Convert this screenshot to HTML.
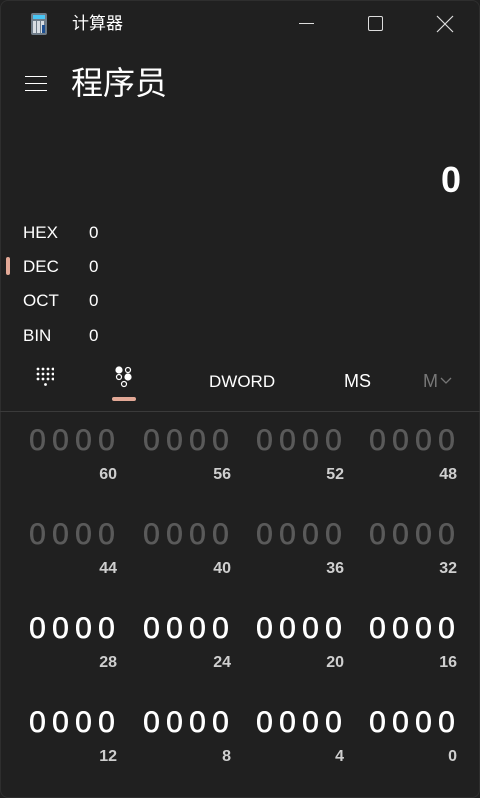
<!DOCTYPE html>
<html><head><meta charset="utf-8"><style>
*{margin:0;padding:0;box-sizing:border-box}
body{width:480px;height:798px;background:#202020;font-family:"Liberation Sans","Noto Sans CJK SC",sans-serif;color:#fff;position:relative;overflow:hidden}
.a{position:absolute;white-space:nowrap}
.g{position:absolute;display:flex;font-size:30px;font-weight:normal;line-height:30px;-webkit-text-stroke:0.6px currentColor}
.g span{width:23px;text-align:center}
.dim{color:#5a5a5a}
.l{position:absolute;font-size:16px;font-weight:bold;color:#cfcfcf;text-align:right;width:60px;line-height:18px}
.r{position:absolute;left:23px;font-size:17px;line-height:20px}
.r b{position:absolute;left:66px;font-weight:normal}
</style></head><body>
<div class="a" style="left:0;top:0;width:480px;height:798px;border:1px solid #2e2e2e;border-radius:8px"></div>
<div class="a" style="left:31px;top:13px;width:16px;height:22px;background:#6f7c88;border-radius:2px"></div>
<div class="a" style="left:33px;top:15px;width:12px;height:4px;background:#49c6f5"></div>
<div class="a" style="left:33px;top:21px;width:12px;height:12px;background:repeating-linear-gradient(90deg,#d8dde3 0 3px,#6f7c88 3px 4px)"></div>
<div class="a" style="left:42px;top:25px;width:3px;height:8px;background:#1d4f91"></div>
<div class="a" style="left:72px;top:13px;font-size:17px;line-height:22px">计算器</div>
<div class="a" style="left:299px;top:23px;width:15px;height:1px;background:#ddd"></div>
<div class="a" style="left:368px;top:16px;width:15px;height:15px;border:1px solid #ddd;border-radius:2px"></div>
<svg class="a" style="left:436px;top:15px" width="18" height="18"><path d="M1 1L17 17M17 1L1 17" stroke="#ddd" stroke-width="1.2"/></svg>
<div class="a" style="left:25px;top:76px;width:22px;height:1px;background:#fff"></div>
<div class="a" style="left:25px;top:83px;width:22px;height:1px;background:#fff"></div>
<div class="a" style="left:25px;top:90px;width:22px;height:1px;background:#fff"></div>
<div class="a" style="left:71px;top:63px;font-size:32px;line-height:40px">程序员</div>
<div class="a" style="right:19px;top:160px;font-size:36px;font-weight:bold;line-height:40px">0</div>
<div class="r" style="top:223px">HEX<b>0</b></div>
<div class="r" style="top:257px">DEC<b>0</b></div>
<div class="r" style="top:291px">OCT<b>0</b></div>
<div class="r" style="top:326px">BIN<b>0</b></div>
<div class="a" style="left:6px;top:257px;width:4px;height:18px;background:#e2a896;border-radius:2px"></div>
<svg class="a" style="left:36px;top:367px" width="18" height="21" fill="#fff">
<circle cx="2" cy="2" r="1.4"/><circle cx="7" cy="2" r="1.4"/><circle cx="12" cy="2" r="1.4"/><circle cx="17" cy="2" r="1.4"/>
<circle cx="2" cy="7" r="1.4"/><circle cx="7" cy="7" r="1.4"/><circle cx="12" cy="7" r="1.4"/><circle cx="17" cy="7" r="1.4"/>
<circle cx="2" cy="12" r="1.4"/><circle cx="7" cy="12" r="1.4"/><circle cx="12" cy="12" r="1.4"/><circle cx="17" cy="12" r="1.4"/>
<circle cx="9.5" cy="17.5" r="1.4"/></svg>
<svg class="a" style="left:114px;top:366px" width="20" height="24" fill="none" stroke="#fff" stroke-width="1.2">
<circle cx="5" cy="4" r="3" fill="#fff"/><circle cx="14" cy="4" r="2.5"/><circle cx="5" cy="11" r="2.5"/><circle cx="14" cy="11" r="3" fill="#fff"/><circle cx="10" cy="18" r="2.5"/></svg>
<div class="a" style="left:112px;top:397px;width:24px;height:4px;background:#e2a896;border-radius:2px"></div>
<div class="a" style="left:209px;top:372px;font-size:17px;line-height:20px">DWORD</div>
<div class="a" style="left:344px;top:371px;font-size:18px;line-height:20px">MS</div>
<div class="a" style="left:423px;top:371px;font-size:18px;line-height:20px;color:#777">M</div>
<svg class="a" style="left:440px;top:377px" width="12" height="8"><path d="M1 1L6 6L11 1" stroke="#777" fill="none" stroke-width="1.3"/></svg>
<div class="a" style="left:0;top:411px;width:480px;height:1px;background:#3a3a3a"></div>
<div class="g dim" style="left:26px;top:426px"><span>0</span><span>0</span><span>0</span><span>0</span></div>
<div class="g dim" style="left:140px;top:426px"><span>0</span><span>0</span><span>0</span><span>0</span></div>
<div class="g dim" style="left:253px;top:426px"><span>0</span><span>0</span><span>0</span><span>0</span></div>
<div class="g dim" style="left:366px;top:426px"><span>0</span><span>0</span><span>0</span><span>0</span></div>
<div class="l" style="left:57px;top:466px">60</div><div class="l" style="left:171px;top:466px">56</div><div class="l" style="left:284px;top:466px">52</div><div class="l" style="left:397px;top:466px">48</div>
<div class="g dim" style="left:26px;top:520px"><span>0</span><span>0</span><span>0</span><span>0</span></div>
<div class="g dim" style="left:140px;top:520px"><span>0</span><span>0</span><span>0</span><span>0</span></div>
<div class="g dim" style="left:253px;top:520px"><span>0</span><span>0</span><span>0</span><span>0</span></div>
<div class="g dim" style="left:366px;top:520px"><span>0</span><span>0</span><span>0</span><span>0</span></div>
<div class="l" style="left:57px;top:560px">44</div><div class="l" style="left:171px;top:560px">40</div><div class="l" style="left:284px;top:560px">36</div><div class="l" style="left:397px;top:560px">32</div>
<div class="g" style="left:26px;top:614px"><span>0</span><span>0</span><span>0</span><span>0</span></div>
<div class="g" style="left:140px;top:614px"><span>0</span><span>0</span><span>0</span><span>0</span></div>
<div class="g" style="left:253px;top:614px"><span>0</span><span>0</span><span>0</span><span>0</span></div>
<div class="g" style="left:366px;top:614px"><span>0</span><span>0</span><span>0</span><span>0</span></div>
<div class="l" style="left:57px;top:654px">28</div><div class="l" style="left:171px;top:654px">24</div><div class="l" style="left:284px;top:654px">20</div><div class="l" style="left:397px;top:654px">16</div>
<div class="g" style="left:26px;top:708px"><span>0</span><span>0</span><span>0</span><span>0</span></div>
<div class="g" style="left:140px;top:708px"><span>0</span><span>0</span><span>0</span><span>0</span></div>
<div class="g" style="left:253px;top:708px"><span>0</span><span>0</span><span>0</span><span>0</span></div>
<div class="g" style="left:366px;top:708px"><span>0</span><span>0</span><span>0</span><span>0</span></div>
<div class="l" style="left:57px;top:748px">12</div><div class="l" style="left:171px;top:748px">8</div><div class="l" style="left:284px;top:748px">4</div><div class="l" style="left:397px;top:748px">0</div>
</body></html>
